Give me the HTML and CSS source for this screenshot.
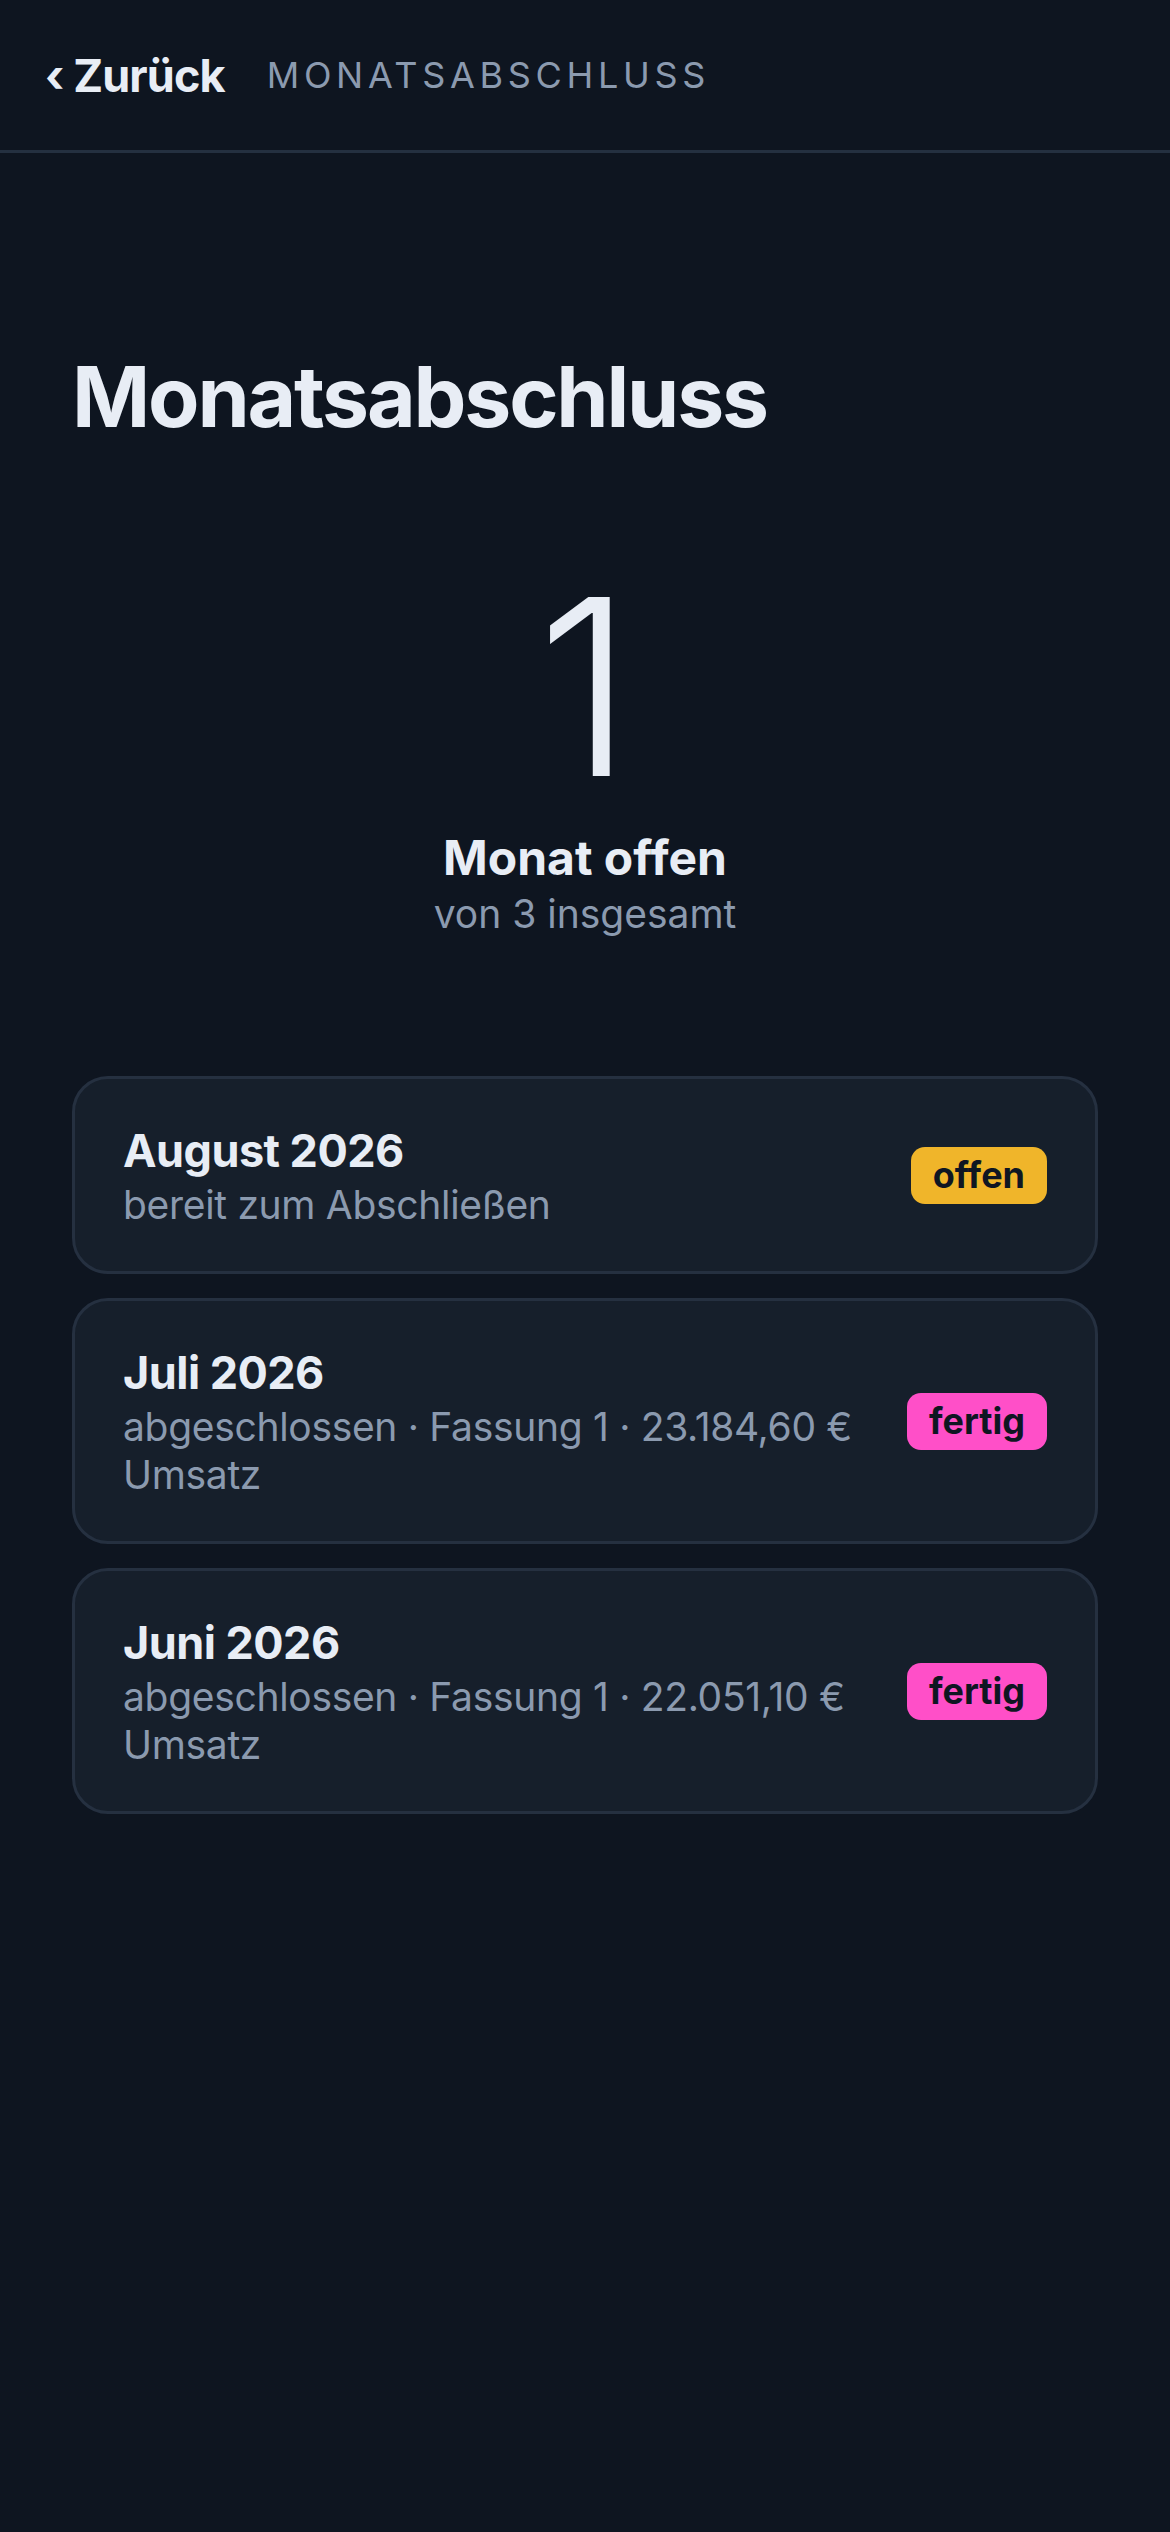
FILE: index.html
```html
<!DOCTYPE html>
<html lang="de">
<head>
<meta charset="utf-8">
<title>Monatsabschluss</title>
<link rel="stylesheet" href="styles.css">
</head>
<body>
<header class="topbar">
  <a class="back" href="#"><span class="chev">‹</span> Zurück</a>
  <span class="crumb">MONATSABSCHLUSS</span>
</header>
<main class="page">
  <h1 class="title">Monatsabschluss</h1>
  <section class="stat">
    <div class="big">1</div>
    <div class="stat-label">Monat offen</div>
    <div class="stat-sub">von 3 insgesamt</div>
  </section>
  <section class="list">
    <div class="card">
      <div class="card-text">
        <div class="card-title">August 2026</div>
        <div class="card-sub">bereit zum Abschließen</div>
      </div>
      <span class="badge badge-open">offen</span>
    </div>
    <div class="card">
      <div class="card-text">
        <div class="card-title">Juli 2026</div>
        <div class="card-sub">abgeschlossen · Fassung 1 · 23.184,60 € Umsatz</div>
      </div>
      <span class="badge badge-done">fertig</span>
    </div>
    <div class="card">
      <div class="card-text">
        <div class="card-title">Juni 2026</div>
        <div class="card-sub">abgeschlossen · Fassung 1 · 22.051,10 € Umsatz</div>
      </div>
      <span class="badge badge-done">fertig</span>
    </div>
  </section>
</main>
</body>
</html>
```
FILE: styles.css
```css
html, body {
  margin: 0;
  padding: 0;
  background: #0e1520;
}
body {
  font-family: Inter, "Noto Sans", "Liberation Sans", sans-serif;
  color: #e8edf5;
  min-height: 2532px;
}
.topbar {
  height: 150px;
  border-bottom: 3px solid #243040;
  display: flex;
  align-items: center;
  padding: 0 45px;
  gap: 42px;
}
.back {
  color: #e8edf5;
  text-decoration: none;
  font-size: 45px;
  font-weight: 700;
  letter-spacing: -0.02em;
}
.chev {
  font-weight: 700;
}
.crumb {
  color: #8b9aaf;
  font-size: 36px;
  font-weight: 400;
  letter-spacing: 0.13em;
}
.page {
  padding: 193px 72px 0;
}
.title {
  margin: 0;
  font-size: 84px;
  line-height: 101px;
  font-weight: 700;
  letter-spacing: -0.026em;
}
.stat {
  margin-top: 114px;
  text-align: center;
}
.big {
  font-size: 246px;
  line-height: 252px;
  font-weight: 300;
}
.stat-label {
  margin-top: 16px;
  font-size: 48px;
  line-height: 58px;
  font-weight: 700;
  letter-spacing: 0;
}
.stat-sub {
  margin-top: 3px;
  font-size: 39px;
  line-height: 48px;
  color: #8b9aaf;
}
.list {
  margin-top: 138px;
  display: flex;
  flex-direction: column;
  gap: 24px;
}
.card {
  display: flex;
  align-items: center;
  gap: 40px;
  padding: 42px 48px;
  background: #161f2b;
  border: 3px solid #253040;
  border-radius: 36px;
}
.card-text {
  flex: 1;
  min-width: 0;
}
.card-title {
  font-size: 45px;
  line-height: 60px;
  font-weight: 700;
  letter-spacing: -0.012em;
}
.card-sub {
  font-size: 39px;
  line-height: 48px;
  color: #8b9aaf;
  letter-spacing: -0.008em;
}
.badge {
  flex: none;
  font-size: 36px;
  line-height: 45px;
  font-weight: 700;
  padding: 6px 22px;
  border-radius: 14px;
  color: #0f1622;
}
.badge-open {
  background: #f0b52a;
}
.badge-done {
  background: #ff4fc8;
}
```
